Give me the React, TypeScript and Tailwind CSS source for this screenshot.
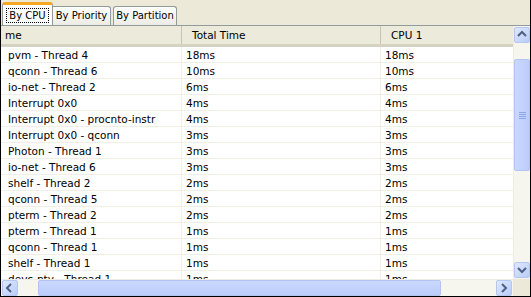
const rows: [string, string, string][] = [
  ["pvm - Thread 4", "18ms", "18ms"],
  ["qconn - Thread 6", "10ms", "10ms"],
  ["io-net - Thread 2", "6ms", "6ms"],
  ["Interrupt 0x0", "4ms", "4ms"],
  ["Interrupt 0x0 - procnto-instr", "4ms", "4ms"],
  ["Interrupt 0x0 - qconn", "3ms", "3ms"],
  ["Photon - Thread 1", "3ms", "3ms"],
  ["io-net - Thread 6", "3ms", "3ms"],
  ["shelf - Thread 2", "2ms", "2ms"],
  ["qconn - Thread 5", "2ms", "2ms"],
  ["pterm - Thread 2", "2ms", "2ms"],
  ["pterm - Thread 1", "1ms", "1ms"],
  ["qconn - Thread 1", "1ms", "1ms"],
  ["shelf - Thread 1", "1ms", "1ms"],
  ["devc-pty - Thread 1", "1ms", "1ms"],
];

// XP 스타일 스크롤 버튼 화살표
function Arrow({ dir }: { dir: "up" | "down" | "left" | "right" }) {
  const d = {
    up: "M3 8 L7 4 L11 8",
    down: "M3 5 L7 9 L11 5",
    left: "M8 3 L4 7 L8 11",
    right: "M5 3 L9 7 L5 11",
  }[dir];
  return (
    <svg width="14" height="14" viewBox="0 0 14 14">
      <path d={d} fill="none" stroke="#4d6185" strokeWidth="2" />
    </svg>
  );
}

function ScrollButton({ dir }: { dir: "up" | "down" | "left" | "right" }) {
  return (
    <div className="w-[16px] h-[16px] shrink-0 flex items-center justify-center rounded-[2px] border border-[#b4c6f2] bg-gradient-to-br from-[#dfe8fd] to-[#b9ccf8]">
      <Arrow dir={dir} />
    </div>
  );
}

export default function App() {
  return (
    <div
      className="w-[531px] h-[297px] bg-[#ece9d8] border-x border-b border-black flex flex-col overflow-hidden text-black text-[10.5px]"
      style={{ fontFamily: "'DejaVu Sans', Tahoma, sans-serif" }}
    >
      {/* 탭 줄 */}
      <div className="h-[26px] shrink-0 flex items-start pl-px border-b border-[#919b9c] text-[10px]">
        <div className="w-[51px] h-[23px] mt-[2px] px-[3px] pt-[3px] border border-b-0 border-[#919b9c] border-t-[3px] border-t-[#f5a623] rounded-t-[3px] bg-[#fcfcfe] -mb-px">
          <div className="h-[15px] leading-[13px] text-center border border-dotted border-black whitespace-nowrap">By CPU</div>
        </div>
        <div className="w-[58px] h-[19px] mt-[6px] leading-[18px] text-center whitespace-nowrap border border-b-0 border-l-0 border-[#919b9c] rounded-tr-[3px] bg-gradient-to-b from-white to-[#ecebe5]">
          By Priority
        </div>
        <div className="w-[64px] h-[19px] mt-[6px] ml-[2px] leading-[18px] text-center whitespace-nowrap border border-b-0 border-[#919b9c] rounded-t-[3px] bg-gradient-to-b from-white to-[#ecebe5]">
          By Partition
        </div>
      </div>

      <div className="flex-1 flex flex-col min-h-0">
        <div className="flex-1 flex min-h-0">
          {/* 테이블 */}
          <div className="flex-1 flex flex-col bg-white overflow-hidden">
            <div className="h-[21px] shrink-0 flex bg-[#ebeadb] border-b-[3px] border-[#d6d2c2] leading-[18px]">
              <div className="w-[181px] pl-[4px] border-r border-[#c7c5b2]">me</div>
              <div className="w-[199px] pl-[10px] border-r border-[#c7c5b2]">Total Time</div>
              <div className="flex-1 pl-[10px]">CPU 1</div>
            </div>
            {rows.map((r, i) => (
              <div key={i} className="h-[16px] shrink-0 flex border-b border-[#f1efe2] leading-[16px]">
                <div className="w-[181px] pl-[7px] border-r border-[#f1efe2] whitespace-nowrap">{r[0]}</div>
                <div className="w-[199px] pl-[4px] border-r border-[#f1efe2]">{r[1]}</div>
                <div className="flex-1 pl-[4px]">{r[2]}</div>
              </div>
            ))}
          </div>
          {/* 세로 스크롤바 */}
          <div className="w-[17px] shrink-0 flex flex-col items-center py-px bg-[#f6f5ee] border-l border-[#eeede5]">
            <ScrollButton dir="up" />
            <div className="flex-1 w-full flex flex-col items-center pt-[16px]">
              <div className="w-[16px] h-[112px] rounded-[2px] border border-[#b1c4f4] bg-gradient-to-r from-[#cad8fd] to-[#bccdf9] flex flex-col items-center justify-center gap-px">
                {[0, 1, 2, 3].map((k) => (
                  <div key={k} className="w-[7px] h-px bg-[#8ea6e6]" />
                ))}
              </div>
            </div>
            <ScrollButton dir="down" />
          </div>
        </div>
        {/* 가로 스크롤바 */}
        <div className="h-[17px] shrink-0 flex">
          <div className="flex-1 flex items-center px-px bg-[#f6f5ee] border-t border-[#eeede5]">
            <ScrollButton dir="left" />
            <div className="flex-1 flex items-center pl-[20px] pr-[55px]">
              <div className="h-[16px] flex-1 rounded-[2px] border border-[#b1c4f4] bg-gradient-to-b from-[#cad8fd] to-[#bccdf9]" />
            </div>
            <ScrollButton dir="right" />
          </div>
          <div className="w-[17px] bg-[#ece9d8]" />
        </div>
      </div>
    </div>
  );
}
